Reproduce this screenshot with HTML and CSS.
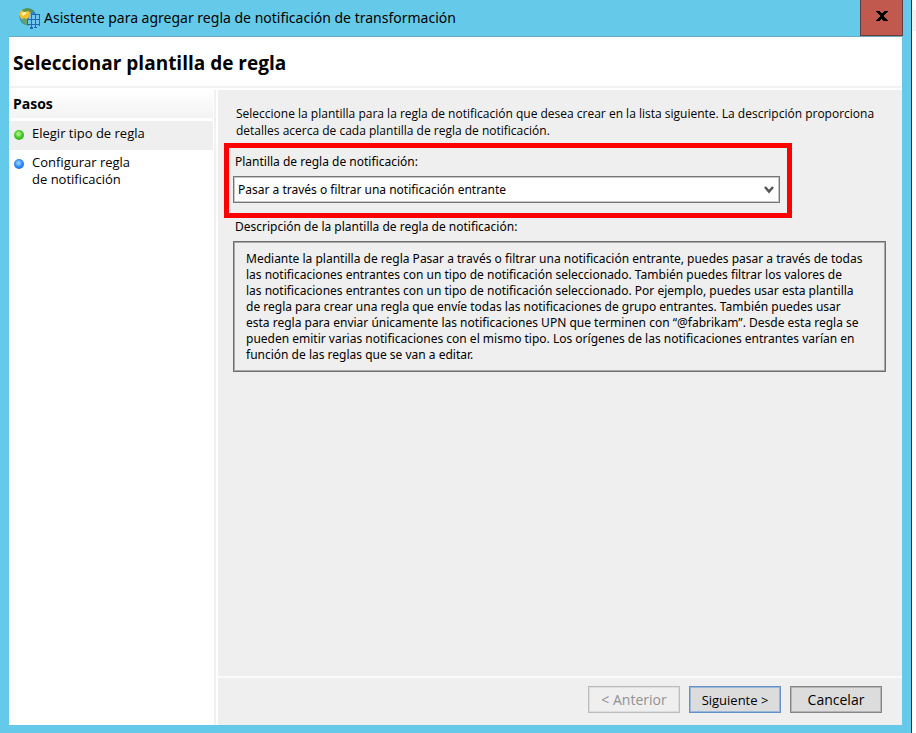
FILE: index.html
```
<!DOCTYPE html>
<html lang="es">
<head>
<meta charset="utf-8">
<meta name="viewport" content="width=device-width, initial-scale=1">
<title>Asistente para agregar regla de notificación de transformación</title>
<link rel="stylesheet" href="styles.css">
</head>
<body>
<div class="window">
  <header class="titlebar">
    <svg class="app-icon" viewBox="0 0 21 21" aria-hidden="true">
      <circle cx="9" cy="9" r="8.500" fill="#3382c6"/>
      <path d="M0 6C1 2 5 1 8 2l4 2-2 5-4 4-4-2z" fill="#f7bd2c"/>
      <path d="M3 2C7-1 12 0 15 3l-3 2-3-2-4 1z" fill="#5b934e"/>
      <path d="M2 11l4-1 3 3 1 5C6 17 3 15 2 11z" fill="#62a567"/>
      <path d="M2 5l4-1 2 1-4 3z" fill="#fff4a8"/>
      <path d="M10 6h11v12h-3v2h-7v-3H8v-6h2z" fill="#72c5ef"/>
      <path d="M12 6h1v10h-1zM16 6h1v10h-1zM20 6h1v12h-1zM12 6h9v1h-9zM9 11h12v1H9zM9 16h12v1H9zM8 11h1v6H8zM12 16h1v4h-1zM16 16h1v4h-1zM11 19h3v2h-3zM15 19h3v1h-3z" fill="#1e68b8"/>
    </svg>
    <h1 class="title">Asistente para agregar regla de notificación de transformación</h1>
    <button class="close" type="button" aria-label="Cerrar">
      <svg viewBox="0 0 12 10" aria-hidden="true"><path d="M0 0h4v1h1v1h2V1h1V0h4v1h-1v1h-1v1H9v1H8v2h1v1h1v1h1v1h1v1H7V9H6V8H5v1H4v1H0V9h1V8h1V7h1V6h1V4H3V3H2V2H1V1H0z"/></svg>
    </button>
  </header>
  <main class="dialog">
    <h2 class="heading">Seleccionar plantilla de regla</h2>
    <div class="columns">
      <nav class="steps">
        <h3 class="steps-title">Pasos</h3>
        <ol class="step-list">
          <li class="step current"><span class="dot green"></span><span>Elegir tipo de regla</span></li>
          <li class="step"><span class="dot blue"></span><span>Configurar regla<br>de notificación</span></li>
        </ol>
      </nav>
      <form class="panel">
        <div class="panel-body">
          <p class="intro">Seleccione la plantilla para la regla de notificación que desea crear en la lista siguiente. La descripción proporciona<br>detalles acerca de cada plantilla de regla de notificación.</p>
          <div class="highlight">
            <label class="label" for="template">Plantilla de regla de notificación:</label>
            <div class="select-wrap">
              <select id="template" class="select"><option>Pasar a través o filtrar una notificación entrante</option></select>
              <svg class="chevron" viewBox="0 0 10 8" aria-hidden="true"><path d="M1 1l4 4.500l4-4.500" fill="none" stroke="#555" stroke-width="2.500"/></svg>
            </div>
          </div>
          <p class="label description-label">Descripción de la plantilla de regla de notificación:</p>
          <p class="description">Mediante la plantilla de regla Pasar a través o filtrar una notificación entrante, puedes pasar a través de todas<br>las notificaciones entrantes con un tipo de notificación seleccionado. También puedes filtrar los valores de<br>las notificaciones entrantes con un tipo de notificación seleccionado. Por ejemplo, puedes usar esta plantilla<br>de regla para crear una regla que envíe todas las notificaciones de grupo entrantes. También puedes usar<br>esta regla para enviar únicamente las notificaciones UPN que terminen con “@fabrikam”. Desde esta regla se<br>pueden emitir varias notificaciones con el mismo tipo. Los orígenes de las notificaciones entrantes varían en<br>función de las reglas que se van a editar.</p>
        </div>
        <footer class="actions">
          <button class="button" type="button" disabled>&lt; Anterior</button>
          <button class="button primary" type="button">Siguiente &gt;</button>
          <button class="button" type="button">Cancelar</button>
        </footer>
      </form>
    </div>
  </main>
</div>
</body>
</html>
```
FILE: styles.css
```
* { box-sizing: border-box; }
body {
  margin: 0;
  padding-right: 4px;
  background: linear-gradient(#fff 10px, #f1f1f1 10px 31px, #fff 31px);
  color: #000;
  font: 12px/16px "Open Sans", "Noto Sans", sans-serif;
}
h1, h2, h3, p, ol { margin: 0; padding: 0; }
.window {
  display: flex;
  flex-direction: column;
  min-height: 100vh;
  padding: 0 9px 8px;
  border-right: 1px solid #173c4d;
  background: #65c9e9;
}
.titlebar {
  display: flex;
  align-items: center;
  height: 37px;
  padding-left: 10px;
  border-bottom: 1px solid #6fa9c0;
}
.app-icon { width: 21px; height: 21px; }
.title {
  flex: 1;
  padding-left: 4px;
  font-family: "Noto Sans", "Open Sans", sans-serif;
  font-size: 14px;
  font-weight: 400;
  line-height: 20px;
}
.close {
  display: flex;
  align-items: center;
  justify-content: center;
  align-self: stretch;
  width: 43px;
  padding: 0 0 4px;
  margin-right: -1px;
  border: 1px solid #633b3d;
  border-top: 0;
  background: #c1594f;
}
.close svg { width: 12px; height: 10px; }
.dialog {
  display: flex;
  flex: 1;
  flex-direction: column;
  background: #fff;
}
.heading {
  padding: 14px 4px 11px;
  border-bottom: 2px solid #f2f2f2;
  font-size: 19px;
  line-height: 24px;
}
.columns { display: flex; flex: 1; padding-top: 2px; }
.steps {
  width: 207px;
  padding-right: 1px;
  border-right: 2px solid #f1f1f1;
}
.steps-title {
  padding: 4px;
  background: linear-gradient(#fff, #f3f3f3);
  font-size: 14px;
  line-height: 20px;
}
.step-list { padding-top: 3px; list-style: none; }
.step {
  display: flex;
  gap: 8px;
  padding: 4px 5px 8px;
  font-size: 13px;
  line-height: 17px;
}
.current { background: #efefef; }
.dot {
  width: 10px;
  height: 10px;
  margin-top: 5px;
  border-radius: 50%;
}
.green { background: radial-gradient(circle at 45% 40%, #a4ec82 0 15%, #43cb22 45%, #32a619 85%); }
.blue { background: radial-gradient(circle at 45% 40%, #8dc4ff 0 15%, #2d8cff 45%, #1668d2 85%); }
.panel {
  display: flex;
  flex: 1;
  flex-direction: column;
  min-width: 0;
  margin-left: 2px;
  background: #efefef;
}
.panel-body { flex: 1; padding: 15px 16px 16px 6px; }
.intro { padding: 0 0 4px 12px; line-height: 17px; white-space: nowrap; }
.highlight {
  max-width: 568px;
  padding: 4px 7px 10px 4px;
  border: 5px solid #f00;
}
.label {
  display: block;
  padding-left: 2px;
  font-family: "Noto Sans", "Open Sans", sans-serif;
  line-height: 20px;
}
.select-wrap { display: grid; align-items: center; margin-top: 4px; }
.select, .chevron { grid-area: 1 / 1; }
.select {
  width: 100%;
  height: 27px;
  padding: 0 24px 0 4px;
  border: 1px solid #767676;
  outline: 1px solid #c6c6c6;
  outline-offset: -2px;
  border-radius: 0;
  background: #fff;
  color: #000;
  font: 12px/16px "Noto Sans", "Open Sans", sans-serif;
  appearance: none;
}
.chevron { justify-self: end; width: 10px; height: 8px; margin-right: 6px; pointer-events: none; }
.description-label { padding-left: 11px; line-height: 18px; }
.description {
  margin: 5px 0 0 9px;
  padding: 9px 0 8px 12px;
  border: 1px solid #6f6f6f;
  outline: 1px solid #a8a8a8;
  outline-offset: -2px;
  font-family: "Noto Sans", "Open Sans", sans-serif;
  white-space: nowrap;
}
.actions {
  display: flex;
  justify-content: flex-end;
  gap: 9px;
  padding: 8px 20px 12px;
  border-top: 2px solid #fbfbfb;
}
.button {
  width: 92px;
  height: 27px;
  padding: 0;
  border: 1px solid #858585;
  outline: 1px solid #b5b5b5;
  outline-offset: -2px;
  background: #dcdcdc;
  color: #000;
  font: 14px/20px "Open Sans", "Noto Sans", sans-serif;
}
.button:disabled { border-color: #b9bdbf; outline-color: #dcdedf; background: #efefef; color: #929292; }
.primary { border-color: #6591c4; outline-color: #9bb8d8; font-size: 13px; }
```
